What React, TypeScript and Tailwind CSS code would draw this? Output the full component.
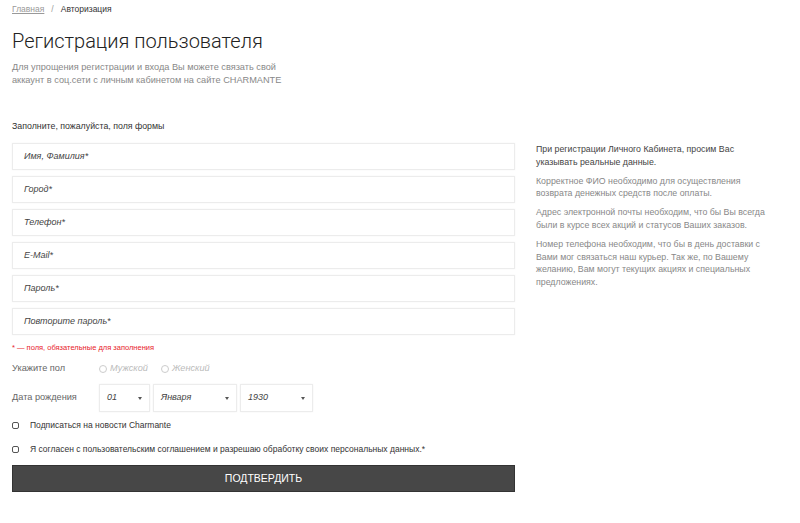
import React from 'react';

const fields = ['Имя, Фамилия*', 'Город*', 'Телефон*', 'E-Mail*', 'Пароль*', 'Повторите пароль*'];

const Caret: React.FC = () => (
  <span className="ml-auto w-0 h-0 border-l-[2.5px] border-r-[2.5px] border-t-[3px] border-l-transparent border-r-transparent border-t-[#555]" />
);

const Select: React.FC<{ value: string; w: string }> = ({ value, w }) => (
  <div className={`${w} h-[28px] flex items-center pl-[7px] pr-[7px] border border-[#ececec] shadow-[0_0_2px_rgba(0,0,0,0.05)] italic text-[9px] text-[#444]`}>
    <span>{value}</span>
    <Caret />
  </div>
);

const Radio: React.FC<{ label: string }> = ({ label }) => (
  <label className="flex items-center gap-[3px] italic text-[#bbb]">
    <span className="w-[8px] h-[8px] rounded-full border border-[#ccc]" />
    {label}
  </label>
);

const Checkbox: React.FC<{ label: string }> = ({ label }) => (
  <label className="h-[11px] flex items-center gap-[11px] text-[8.5px] text-[#333]">
    <span className="w-[7px] h-[7px] rounded-[2px] border border-[#555]" />
    {label}
  </label>
);

export default function App() {
  return (
    <div className="w-[800px] h-[523px] bg-white px-[12px] text-[#333] font-['Liberation_Sans',Arial,sans-serif] overflow-hidden">
      <nav className="pt-[4px] text-[8.5px] leading-[10px] flex gap-[7px]">
        <a className="underline text-[#999]">Главная</a>
        <span className="text-[#999]">/</span>
        <span>Авторизация</span>
      </nav>

      <h1 className="mt-[15px] text-[20px] leading-[24px] text-[#222] font-['Roboto',sans-serif] font-light">Регистрация пользователя</h1>
      <p className="mt-[8px] w-[290px] text-[9.2px] leading-[12.5px] text-[#888]">
        Для упрощения регистрации и входа Вы можете связать свой аккаунт в соц.сети с личным кабинетом на сайте CHARMANTE
      </p>

      <div className="mt-[34px] flex gap-[21px]">
        <div className="w-[503px]">
          <p className="text-[8.8px] leading-[12px]">Заполните, пожалуйста, поля формы</p>
          <div className="mt-[11px] flex flex-col gap-[6px]">
            {fields.map((f) => (
              <div key={f} className="h-[27px] border border-[#ececec] shadow-[0_0_2px_rgba(0,0,0,0.04)] flex items-center px-[11px] italic text-[9px] text-[#444]">
                {f}
              </div>
            ))}
          </div>
          <p className="mt-[8px] text-[7.5px] leading-[10px] text-[#e8232c]">* — поля, обязательные для заполнения</p>

          <div className="mt-[10px] h-[12px] flex items-center text-[9.2px] text-[#666]">
            <span className="w-[87px]">Укажите пол</span>
            <div className="flex gap-[13px]">
              <Radio label="Мужской" />
              <Radio label="Женский" />
            </div>
          </div>

          <div className="mt-[9px] flex items-center text-[9.2px] text-[#666]">
            <span className="w-[87px]">Дата рождения</span>
            <div className="flex gap-[3px]">
              <Select value="01" w="w-[51px]" />
              <Select value="Января" w="w-[84px]" />
              <Select value="1930" w="w-[73px]" />
            </div>
          </div>

          <div className="mt-[8px] flex flex-col gap-[13px]">
            <Checkbox label="Подписаться на новости Charmante" />
            <Checkbox label="Я согласен с пользовательским соглашением и разрешаю обработку своих персональных данных.*" />
          </div>

          <button className="mt-[10px] w-full h-[27px] bg-[#474747] text-white text-[10.5px] border border-[#333]">ПОДТВЕРДИТЬ</button>
        </div>

        <aside className="mt-[23px] w-[240px] text-[8.8px] leading-[12.8px] text-[#888] flex flex-col gap-[6px]">
          <p className="text-[#444]">При регистрации Личного Кабинета, просим Вас указывать реальные данные.</p>
          <p>Корректное ФИО необходимо для осуществления возврата денежных средств после оплаты.</p>
          <p>Адрес электронной почты необходим, что бы Вы всегда были в курсе всех акций и статусов Ваших заказов.</p>
          <p>Номер телефона необходим, что бы в день доставки с Вами мог связаться наш курьер. Так же, по Вашему желанию, Вам могут текущих акциях и специальных предложениях.</p>
        </aside>
      </div>
    </div>
  );
}
